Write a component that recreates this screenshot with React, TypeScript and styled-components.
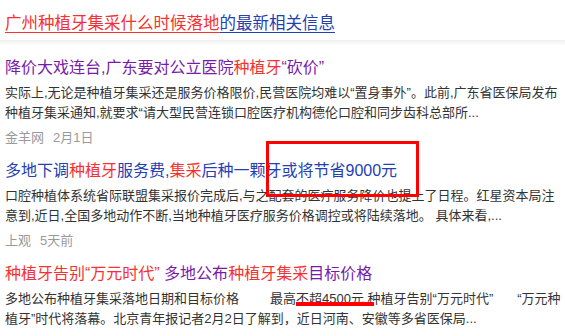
import React from "react";
import styled, { createGlobalStyle } from "styled-components";

const GlobalStyle = createGlobalStyle`
  html, body {
    margin: 0;
    padding: 0;
    background: #fff;
  }

  body {
    font-family: "Liberation Sans", "Noto Sans CJK SC", sans-serif;
  }
`;

const Page = styled.div`
  position: relative;
  width: 565px;
  height: 336px;
  overflow: hidden;
`;

const Header = styled.div`
  height: 40px;
  box-sizing: border-box;
  padding: 11px 0 0 5px;
  font-size: 16.5px;
  line-height: 24px;
  white-space: nowrap;
`;

const HeaderLink = styled.a<{ $red?: boolean }>`
  color: ${(p) => (p.$red ? "#f73131" : "#2440b3")};
  text-decoration: underline;
  text-underline-offset: 3px;
`;

const Shade = styled.div`
  height: 6px;
  background: linear-gradient(#f0f0f0, #fff);
`;

const List = styled.div`
  display: flex;
  flex-direction: column;
  row-gap: 13px;
  padding: 11px 0 0 5px;
`;

const Item = styled.div``;

const Title = styled.div<{ $visited?: boolean }>`
  font-size: 16px;
  line-height: 22px;
  margin-bottom: 4px;
  white-space: nowrap;
  color: ${(p) => (p.$visited ? "#771caa" : "#2440b3")};
`;

const Em = styled.span`
  color: #f73131;
`;

const Snippet = styled.div`
  font-size: 13px;
  line-height: 20px;
  color: #333;
`;

const Line = styled.div`
  white-space: pre;
`;

const Gap = styled.span<{ $w: number }>`
  display: inline-block;
  width: ${(p) => p.$w}px;
`;

const Meta = styled.div`
  display: flex;
  column-gap: 9px;
  margin-top: 6px;
  font-size: 13px;
  line-height: 18px;
  color: #999;
`;

const MarkBox = styled.div`
  position: absolute;
  left: 266px;
  top: 141px;
  width: 153px;
  height: 56px;
  box-sizing: border-box;
  border: 3px solid #ff0000;
`;

const MarkBar = styled.div`
  position: absolute;
  left: 296px;
  top: 302px;
  width: 78px;
  height: 4px;
  background: #ff0000;
`;

type Seg = [string, boolean?];

const results: {
  title: Seg[];
  visited: boolean;
  lines: React.ReactNode[];
  source: string;
  date: string;
}[] = [
  {
    visited: true,
    title: [["降价大戏连台,广东要对公立医院"], ["种植牙", true], ["“砍价”"]],
    lines: [
      "实际上,无论是种植牙集采还是服务价格限价,民营医院均难以“置身事外”。此前,广东省医保局发布",
      "种植牙集采通知,就要求“请大型民营连锁口腔医疗机构德伦口腔和同步齿科总部所...",
    ],
    source: "金羊网",
    date: "2月1日",
  },
  {
    visited: false,
    title: [["多地下调"], ["种植牙", true], ["服务费,"], ["集采", true], ["后种一颗牙或将节省9000元"]],
    lines: [
      "口腔种植体系统省际联盟集采报价完成后,与之配套的医疗服务降价也提上了日程。红星资本局注",
      "意到,近日,全国多地动作不断,当地种植牙医疗服务价格调控或将陆续落地。 具体来看,...",
    ],
    source: "上观",
    date: "5天前",
  },
  {
    visited: true,
    title: [["种植牙告别“万元时代”", true], [" 多地公布"], ["种植牙集采", true], ["目标价格"]],
    lines: [
      <>
        多地公布种植牙集采落地日期和目标价格
        <Gap $w={31} />
        最高不超4500元 种植牙告别“万元时代”
        <Gap $w={24} />
        “万元种
      </>,
      "植牙”时代将落幕。北京青年报记者2月2日了解到，近日河南、安徽等多省医保局...",
    ],
    source: "",
    date: "",
  },
];

export default function App() {
  return (
    <Page>
      <GlobalStyle />
      <Header>
        <HeaderLink $red>广州种植牙集采什么时候落地</HeaderLink>
        <HeaderLink>的最新相关信息</HeaderLink>
      </Header>
      <Shade />
      <List>
        {results.map((r, i) => (
          <Item key={i}>
            <Title $visited={r.visited}>
              {r.title.map(([text, em], j) => (em ? <Em key={j}>{text}</Em> : <span key={j}>{text}</span>))}
            </Title>
            <Snippet>
              {r.lines.map((line, j) => (
                <Line key={j}>{line}</Line>
              ))}
            </Snippet>
            {r.source && (
              <Meta>
                <span>{r.source}</span>
                <span>{r.date}</span>
              </Meta>
            )}
          </Item>
        ))}
      </List>
      <MarkBox />
      <MarkBar />
    </Page>
  );
}
